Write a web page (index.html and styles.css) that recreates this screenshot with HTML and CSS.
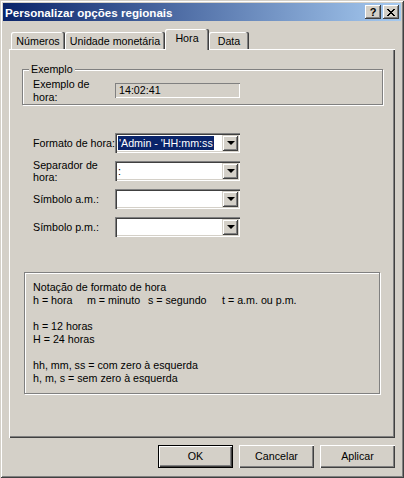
FILE: index.html
```html
<!DOCTYPE html>
<html lang="pt">
  <head>
    <meta charset="utf-8" />
    <title>Personalizar opções regionais</title>
    <link rel="stylesheet" href="styles.css">
  </head>
  <body>
    <div class="window">
      <div class="titlebar">
        <span class="title">Personalizar opções regionais</span>
        <span class="caption-btn help">?</span>
        <span class="caption-btn close">
          <svg width="8" height="7" viewBox="0 0 8 7" shape-rendering="crispEdges">
            <path d="M0 0h2v1h-2z M6 0h2v1h-2z M1 1h2v1h-2z M5 1h2v1h-2z M2 2h4v1h-4z M3 3h2v1h-2z M2 4h4v1h-4z M1 5h2v1h-2z M5 5h2v1h-2z M0 6h2v1h-2z M6 6h2v1h-2z" fill="#000"/>
          </svg>
        </span>
      </div>

      <div class="dialog">
        <!-- tabs -->
        <div class="tabs">
          <div class="tab tab-numbers">Números</div>
          <div class="tab tab-currency">Unidade monetária</div>
          <div class="tab tab-time active">Hora</div>
          <div class="tab tab-date">Data</div>
        </div>

        <div class="panel">
          <div class="group sample-group">
            <div class="group-title">Exemplo</div>
            <div class="sample-row">
              <div class="label">Exemplo de hora:</div>
              <div class="sample-field">14:02:41</div>
            </div>
          </div>

          <div class="fields">
            <div class="field-row">
              <div class="label nowrap">Formato de hora:</div>
              <div class="combo">
                <span class="combo-value"><span class="selected">'Admin - 'HH:mm:ss</span></span>
                <span class="combo-btn"><span class="arrow"></span></span>
              </div>
            </div>
            <div class="field-row">
              <div class="label two-lines">Separador de hora:</div>
              <div class="combo">
                <span class="combo-value">:</span>
                <span class="combo-btn"><span class="arrow"></span></span>
              </div>
            </div>
            <div class="field-row">
              <div class="label nowrap">Símbolo a.m.:</div>
              <div class="combo">
                <span class="combo-value"></span>
                <span class="combo-btn"><span class="arrow"></span></span>
              </div>
            </div>
            <div class="field-row">
              <div class="label nowrap">Símbolo p.m.:</div>
              <div class="combo">
                <span class="combo-value"></span>
                <span class="combo-btn"><span class="arrow"></span></span>
              </div>
            </div>
          </div>

          <div class="group notes">
            <div class="line">Notação de formato de hora</div>
            <div class="line cols">
              <span class="col-h">h = hora</span>
              <span class="col-m">m = minuto</span>
              <span class="col-s">s = segundo</span>
              <span>t = a.m. ou p.m.</span>
            </div>
            <div class="line"></div>
            <div class="line">h = 12 horas</div>
            <div class="line">H = 24 horas</div>
            <div class="line"></div>
            <div class="line">hh, mm, ss = com zero à esquerda</div>
            <div class="line">h, m, s = sem zero à esquerda</div>
          </div>
        </div>

        <div class="buttons">
          <div class="btn default"><span class="btn-face">OK</span></div>
          <div class="btn"><span class="btn-face">Cancelar</span></div>
          <div class="btn"><span class="btn-face">Aplicar</span></div>
        </div>
      </div>
    </div>
  </body>
</html>
```

FILE: styles.css
```css
html,
body {
  margin: 0;
  padding: 0;
  overflow: hidden;
  background-color: #d4d0c8;
}

.window {
  width: 404px;
  height: 478px;
  box-sizing: border-box;
  padding: 3px 3px 0;
  background-color: #d4d0c8;
  font-family: "Liberation Sans", Arial, sans-serif;
  font-size: 10.7px;
  line-height: 13px;
  color: #000;
  box-shadow: inset 1px 1px #d4d0c8, inset -1px -1px #404040, inset 2px 2px #fff, inset -2px -2px #808080;
}

/* title bar */
.titlebar {
  height: 18px;
  display: flex;
  align-items: center;
  padding: 0 2px 0 2px;
  background: linear-gradient(to right, #0a246a, #a6caf0);
}

.title {
  flex-grow: 1;
  color: #fff;
  font-weight: bold;
  font-size: 11.6px;
}

.caption-btn {
  width: 16px;
  height: 14px;
  box-sizing: border-box;
  display: flex;
  align-items: center;
  justify-content: center;
  background-color: #d4d0c8;
  font-weight: bold;
  font-size: 11px;
  box-shadow: inset -1px -1px #404040, inset 1px 1px #fff, inset -2px -2px #808080;
}

.caption-btn.help {
  margin-right: 2px;
}

/* dialog body */
.dialog {
  padding: 8px 6px 0;
}

.tabs {
  height: 20px;
  display: flex;
  align-items: flex-end;
  padding-left: 2px;
}

.tab {
  height: 17px;
  box-sizing: border-box;
  padding-top: 3px;
  text-align: center;
  border-radius: 2px 2px 0 0;
  box-shadow: inset -1px 0 #404040, inset -2px 0 #808080, inset 1px 1px #fff;
}

.tab.active {
  height: 21px;
  margin-bottom: -1px;
  position: relative;
  z-index: 1;
  background-color: #d4d0c8;
}

.tab-numbers { width: 54px; }
.tab-currency { width: 100px; }
.tab-time { width: 44px; }
.tab-date { width: 40px; }

.panel {
  height: 389px;
  box-sizing: border-box;
  padding: 20px 12px 0 13px;
  box-shadow: inset 1px 1px #fff, inset -1px -1px #404040, inset -2px -2px #808080;
}

/* etched group boxes */
.group {
  border: 1px solid #808080;
  box-shadow: inset 1px 1px #fff, 1px 1px #fff;
}

.group-title {
  width: max-content;
  margin: -7px 0 0 -4px;
  padding: 0 2px;
  background-color: #d4d0c8;
}

.sample-group {
  height: 36px;
  box-sizing: border-box;
  padding-left: 10px;
}

.sample-row {
  display: flex;
  align-items: flex-start;
  margin-top: 2px;
}

.label {
  width: 82px;
  flex-shrink: 0;
}

.nowrap {
  white-space: nowrap;
}

.sample-field {
  width: 125px;
  height: 15px;
  box-sizing: border-box;
  margin-top: 5px;
  padding: 1px 0 0 4px;
  box-shadow: inset 1px 1px #808080, inset -1px -1px #fff;
}

/* combo boxes */
.fields {
  margin-top: 28px;
  padding-left: 11px;
}

.field-row {
  height: 20px;
  display: flex;
  align-items: center;
  margin-bottom: 8px;
}

.label.two-lines {
  line-height: 12px;
}

.combo {
  width: 125px;
  height: 20px;
  box-sizing: border-box;
  padding: 2px;
  display: flex;
  background-color: #fff;
  box-shadow: inset 1px 1px #808080, inset 2px 2px #404040, inset -1px -1px #fff, inset -2px -2px #d4d0c8;
}

.combo-value {
  flex-grow: 1;
  padding: 1px 0 0 1px;
  line-height: 14px;
  white-space: nowrap;
}

.selected {
  display: inline-block;
  background-color: #0a246a;
  color: #fff;
  padding: 0 1px;
}

.combo-btn {
  width: 16px;
  height: 16px;
  box-sizing: border-box;
  display: flex;
  align-items: center;
  justify-content: center;
  background-color: #d4d0c8;
  box-shadow: inset 1px 1px #d4d0c8, inset -1px -1px #404040, inset 2px 2px #fff, inset -2px -2px #808080;
}

.arrow {
  width: 0;
  height: 0;
  border-left: 4px solid transparent;
  border-right: 4px solid transparent;
  border-top: 4px solid #000;
  margin-left: 1px;
}

/* notation box */
.notes {
  margin: 35px 3px 0 2px;
  padding: 8px 0 8px 8px;
}

.line {
  height: 13px;
  white-space: nowrap;
}

.cols {
  display: flex;
}

.col-h { width: 54px; }
.col-m { width: 61px; }
.col-s { width: 74px; }

/* buttons */
.buttons {
  display: flex;
  justify-content: flex-end;
  gap: 6px;
  margin-top: 7px;
}

.btn {
  width: 75px;
  height: 23px;
  box-sizing: border-box;
  display: flex;
  box-shadow: inset 1px 1px #fff, inset -1px -1px #404040, inset -2px -2px #808080;
}

.btn.default {
  padding: 1px;
  box-shadow: inset 0 0 0 1px #000;
}

.btn-face {
  flex-grow: 1;
  display: flex;
  align-items: center;
  justify-content: center;
}

.btn.default .btn-face {
  box-shadow: inset 1px 1px #fff, inset -1px -1px #404040, inset -2px -2px #808080;
}
```
